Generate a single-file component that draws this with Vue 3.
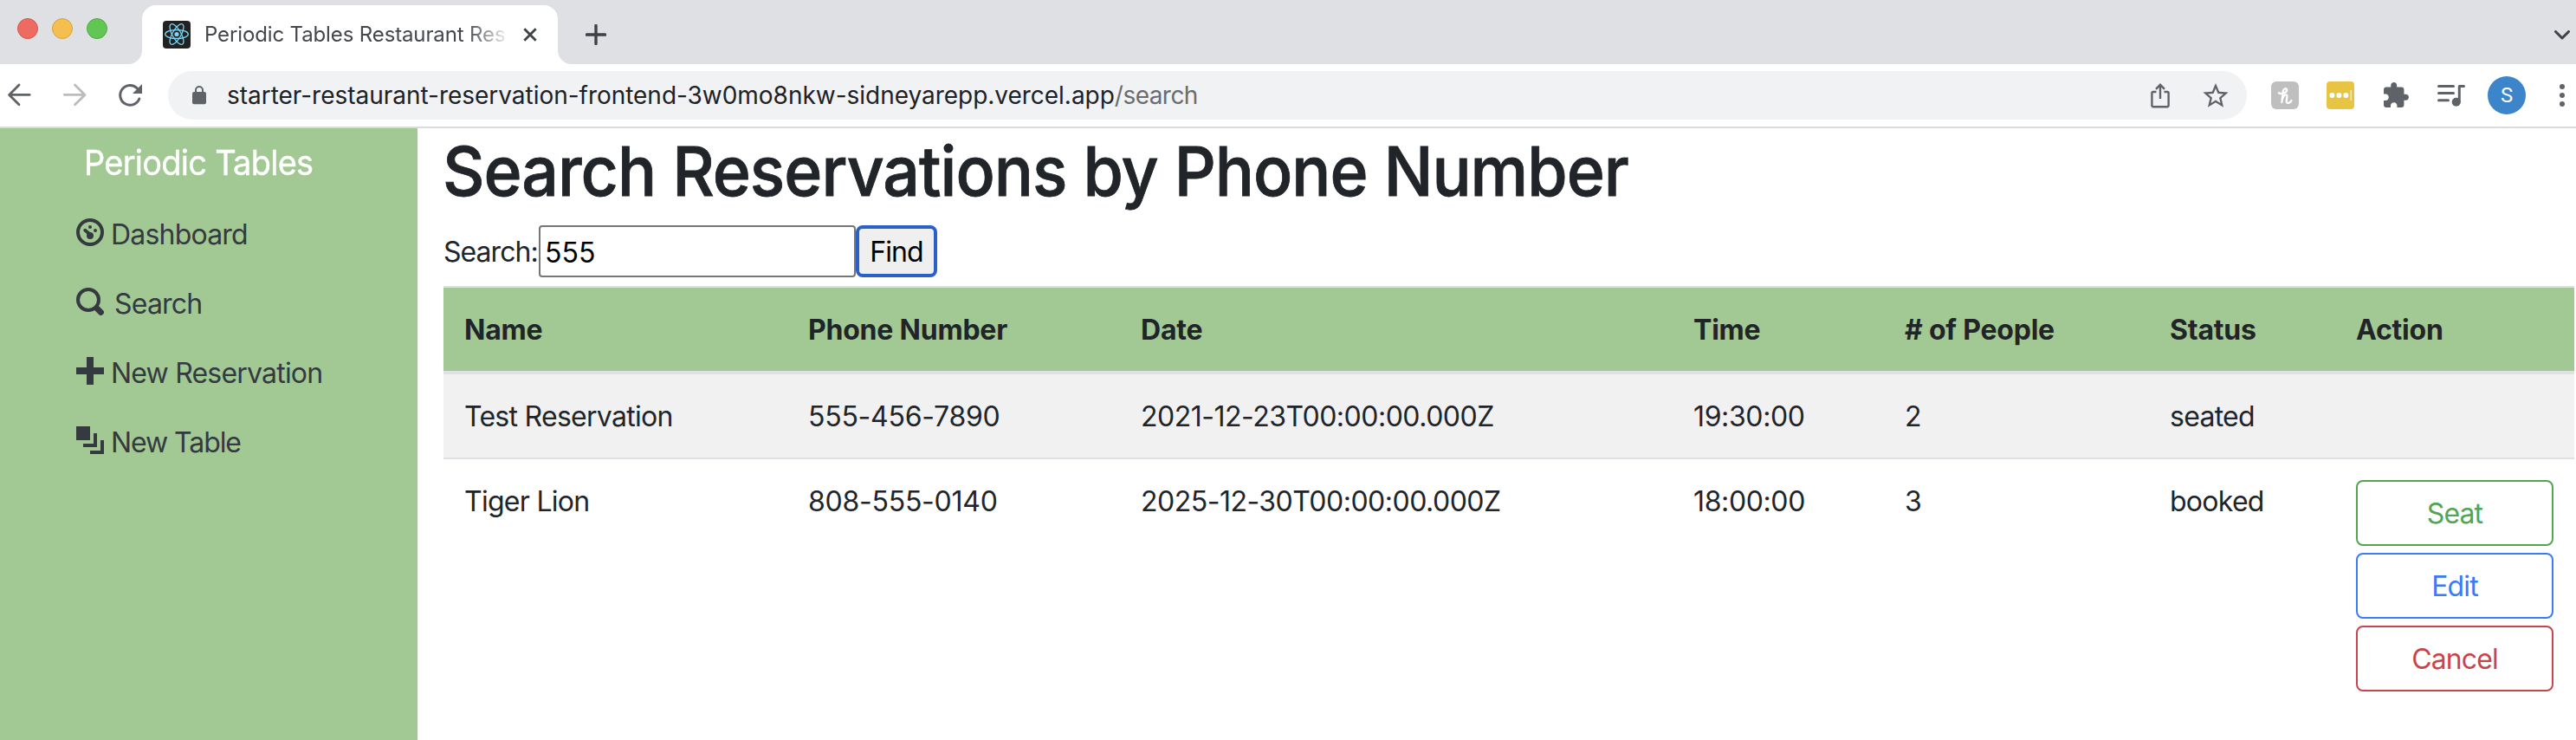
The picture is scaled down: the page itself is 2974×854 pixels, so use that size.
<script setup>
import { ref } from 'vue'

const query = ref('555')

const columns = [
  { key: 'name', label: 'Name' },
  { key: 'phone', label: 'Phone Number' },
  { key: 'date', label: 'Date' },
  { key: 'time', label: 'Time' },
  { key: 'people', label: '# of People' },
  { key: 'status', label: 'Status' }
]

const reservations = [
  { id: 1, name: 'Test Reservation', phone: '555-456-7890', date: '2021-12-23T00:00:00.000Z', time: '19:30:00', people: 2, status: 'seated' },
  { id: 2, name: 'Tiger Lion', phone: '808-555-0140', date: '2025-12-30T00:00:00.000Z', time: '18:00:00', people: 3, status: 'booked' }
]
</script>

<template>
  <div class="window">
    <div class="tabstrip">
      <div class="lights">
        <span class="light red"></span>
        <span class="light yellow"></span>
        <span class="light green"></span>
      </div>
      <div class="tab">
        <svg class="favicon" viewBox="0 0 32 32">
          <rect width="32" height="32" rx="4" fill="#222" />
          <g fill="none" stroke="#7ed3f3" stroke-width="1.3">
            <ellipse cx="16" cy="15.5" rx="13.3" ry="5" />
            <ellipse cx="16" cy="15.5" rx="13.3" ry="5" transform="rotate(60 16 15.5)" />
            <ellipse cx="16" cy="15.5" rx="13.3" ry="5" transform="rotate(120 16 15.5)" />
          </g>
          <circle cx="16" cy="15.5" r="2.6" fill="#7ed3f3" />
        </svg>
        <span class="tab-title">Periodic Tables Restaurant Res</span>
        <svg class="tab-close" viewBox="0 0 16 16"><path d="M1.3 1.3 14.7 14.7M14.7 1.3 1.3 14.7" fill="none" stroke="#3e4246" stroke-width="2.8" /></svg>
      </div>
      <svg class="new-tab" viewBox="0 0 24 24"><path d="M12 1.4v21.2M1.4 12h21.2" fill="none" stroke="#3e4246" stroke-width="3.4" stroke-linecap="round" /></svg>
      <svg class="tab-menu" viewBox="0 0 18 12"><path d="M1.5 1.5 9 9l7.5-7.5" fill="none" stroke="#3e4246" stroke-width="3" stroke-linecap="round" stroke-linejoin="round" /></svg>
    </div>

    <div class="toolbar">
      <svg class="icon" viewBox="0 0 32 32"><path d="M16 4 4.6 15.4 16 26.8M5 15.4h23.2" fill="none" stroke="#5f6368" stroke-width="2.8" stroke-linecap="round" stroke-linejoin="round" /></svg>
      <svg class="icon" viewBox="0 0 32 32"><path d="M16.5 4 28 15.4 16.5 26.8M27.5 15.4H4.3" fill="none" stroke="#bbbcbe" stroke-width="2.8" stroke-linecap="round" stroke-linejoin="round" /></svg>
      <svg class="icon" viewBox="0 0 32 32">
        <path d="M24.4 8A11.4 11.4 0 1 0 26.8 20" fill="none" stroke="#5f6368" stroke-width="3" stroke-linecap="round" />
        <path d="M30 3v11H19z" fill="#5f6368" />
      </svg>
      <div class="omnibox">
        <svg class="lock" viewBox="0 0 16 22">
          <rect x="0" y="7" width="16" height="14.2" rx="2" fill="#5f6368" />
          <path d="M4 8V5a4 4 0 0 1 8 0v3" fill="none" stroke="#5f6368" stroke-width="2" />
        </svg>
        <span class="url"><span class="host">starter-restaurant-reservation-frontend-3w0mo8nkw-sidneyarepp.vercel.app</span><span class="path">/search</span></span>
        <svg class="icon share" viewBox="0 0 32 32">
          <path d="M11.5 12H8a1.6 1.6 0 0 0-1.6 1.6v14A1.6 1.6 0 0 0 8 29.2h16a1.6 1.6 0 0 0 1.6-1.6v-14A1.6 1.6 0 0 0 24 12h-3.5M16 20V4M11 8.8l5-5 5 5" fill="none" stroke="#5f6368" stroke-width="2.4" />
        </svg>
        <svg class="icon star" viewBox="1.05 .63 21.9 21.9">
          <path d="M22 9.24l-7.19-.62L12 2 9.19 8.63 2 9.24l5.46 4.73L5.82 21 12 17.27 18.18 21l-1.63-7.03L22 9.24zM12 15.4l-3.76 2.27 1-4.28-3.32-2.88 4.38-.38L12 6.1l1.71 4.04 4.38.38-3.32 2.88 1 4.28L12 15.4z" fill="#5f6368" />
        </svg>
      </div>
      <svg class="icon honey" viewBox="0 0 32 32">
        <rect width="32" height="32" rx="6" fill="#bfbfbf" />
        <path d="M8.8 13.2C12 15.5 18.6 12.8 18.2 9.6 17.9 7.4 14.6 7.8 13.8 11L12.4 24M12.6 21C14 17 16 14.8 17.9 15.6c2.2 1-2.2 8.6 1 9.2 2 .3 3.8-1.2 4.6-2.8" fill="none" stroke="#fff" stroke-width="2.3" stroke-linecap="round" stroke-linejoin="round" />
      </svg>
      <svg class="icon" viewBox="0 0 32 32">
        <rect width="32" height="32" rx="4" fill="#e7c443" />
        <circle cx="6.4" cy="16" r="3" fill="#fff" /><circle cx="14.4" cy="16" r="3" fill="#fff" /><circle cx="22.4" cy="16" r="3" fill="#fff" />
        <path d="M28.2 10v12" stroke="#f8edc4" stroke-width="1.3" />
      </svg>
      <svg class="icon" viewBox=".55 .27 23.2 23.2">
        <path d="M20.5 11H19V7c0-1.1-.9-2-2-2h-4V3.5C13 2.12 11.88 1 10.5 1S8 2.12 8 3.5V5H4c-1.1 0-1.99.9-1.99 2v3.8H3.5c1.49 0 2.7 1.21 2.7 2.7s-1.21 2.7-2.7 2.7H2V20c0 1.1.9 2 2 2h3.8v-1.5c0-1.49 1.21-2.7 2.7-2.7 1.49 0 2.7 1.21 2.7 2.7V22H17c1.1 0 2-.9 2-2v-4h1.5c1.38 0 2.5-1.12 2.5-2.5S21.88 11 20.5 11z" fill="#5f6368" />
      </svg>
      <svg class="icon" viewBox="0 0 32 32">
        <path d="M1.5 5.5h17M1.5 13.6h17M1.5 21.7h11" stroke="#5f6368" stroke-width="3" stroke-linecap="round" />
        <circle cx="21.7" cy="23.8" r="5" fill="#5f6368" />
        <path d="M25.3 24V5.5h5.2" fill="none" stroke="#5f6368" stroke-width="3" stroke-linecap="round" stroke-linejoin="round" />
      </svg>
      <span class="avatar">S</span>
      <svg class="icon menu" viewBox="0 0 32 32"><circle cx="16" cy="6" r="3" fill="#5f6368" /><circle cx="16" cy="16" r="3" fill="#5f6368" /><circle cx="16" cy="26" r="3" fill="#5f6368" /></svg>
    </div>

    <div class="page">
      <nav class="sidebar">
        <a class="brand">Periodic Tables</a>
        <a class="nav-link">
          <svg class="oi" viewBox="0 0 8 8" fill="#343a40">
            <circle cx="4" cy="4" r="3.5" fill="none" stroke="#343a40" />
            <circle cx="4" cy="2.5" r=".5" /><circle cx="5.5" cy="3.5" r=".5" /><circle cx="4" cy="5" r="1" />
            <path d="M2.55 3.45 4 4.6" stroke="#343a40" stroke-width=".95" stroke-linecap="round" />
          </svg>
          <span>Dashboard</span>
        </a>
        <a class="nav-link wide-gap">
          <svg class="oi" viewBox="0 0 8 8">
            <circle cx="3.5" cy="3.5" r="3" fill="none" stroke="#343a40" />
            <path d="M6.1 6.1 7.1 7.1" stroke="#343a40" stroke-width="1.75" stroke-linecap="round" />
          </svg>
          <span>Search</span>
        </a>
        <a class="nav-link">
          <svg class="oi" viewBox="0 0 8 8"><path d="M3 0v3H0v2h3v3h2V5h3V3H5V0z" fill="#343a40" /></svg>
          <span>New Reservation</span>
        </a>
        <a class="nav-link tight">
          <svg class="oi" viewBox="0 0 8 8"><path d="M0 0v4h4V0zM5 2v3H2v1h4V2zM7 4v3H4v1h4V4z" fill="#343a40" /></svg>
          <span>New Table</span>
        </a>
      </nav>

      <main class="content">
        <h1>Search Reservations by Phone Number</h1>
        <form class="search" @submit.prevent>
          <label for="phone">Search:</label>
          <input id="phone" v-model="query" type="text" />
          <button class="find" type="submit">Find</button>
        </form>
        <table>
          <colgroup>
            <col class="c-name" /><col class="c-phone" /><col class="c-date" /><col class="c-time" /><col class="c-people" /><col class="c-status" /><col class="c-action" />
          </colgroup>
          <thead>
            <tr>
              <th v-for="c in columns" :key="c.key">{{ c.label }}</th>
              <th>Action</th>
            </tr>
          </thead>
          <tbody>
            <tr v-for="r in reservations" :key="r.id">
              <td v-for="c in columns" :key="c.key" :class="c.key">{{ r[c.key] }}</td>
              <td>
                <div v-if="r.status === 'booked'" class="actions">
                  <button class="btn seat">Seat</button>
                  <button class="btn edit">Edit</button>
                  <button class="btn cancel">Cancel</button>
                </div>
              </td>
            </tr>
          </tbody>
        </table>
      </main>
    </div>
  </div>
</template>

<style>
body { background: #fff; }
</style>

<style scoped>
* { box-sizing: border-box; }
svg { display: block; flex: none; }
.window { width: 2974px; height: 854px; overflow: hidden; display: flex; flex-direction: column; background: #fff; color: #212529; font-family: Inter, "Liberation Sans", sans-serif; font-size: 32px; line-height: 48px; }

.tabstrip { height: 74px; flex: none; display: flex; background: #dfe0e4; padding-left: 20px; }
.lights { display: flex; gap: 16px; padding-top: 21px; width: 144px; }
.light { width: 24px; height: 24px; border-radius: 50%; border: 1px solid; }
.red { background: #ed6b60; border-color: #d6554a; }
.yellow { background: #f5bf4f; border-color: #d9a13f; }
.green { background: #62c655; border-color: #4fa93d; }
.tab { position: relative; width: 480px; height: 68px; margin-top: 6px; padding: 0 24px; display: flex; align-items: center; background: #fff; border-radius: 16px 16px 0 0; }
.tab::before, .tab::after { content: ""; position: absolute; bottom: 0; width: 16px; height: 16px; }
.tab::before { left: -16px; background: radial-gradient(circle at 0 0, transparent 15.5px, #fff 16.5px); }
.tab::after { right: -16px; background: radial-gradient(circle at 100% 0, transparent 15.5px, #fff 16.5px); }
.favicon { width: 32px; height: 32px; }
.tab-title { width: 348px; margin-left: 16px; white-space: nowrap; font-size: 24px; line-height: 32px; letter-spacing: -0.13px; color: #44474b; mask-image: linear-gradient(to right, #000 302px, transparent 354px); }
.tab-close { width: 16px; height: 16px; margin-left: 20px; }
.new-tab { width: 24px; height: 24px; margin: 28px 0 0 32px; }
.tab-menu { width: 18px; height: 12px; margin: 35px 7px 0 auto; }

.toolbar { height: 74px; flex: none; display: flex; align-items: center; padding-left: 6px; border-bottom: 2px solid #dadbdc; background: #fff; }
.icon { width: 32px; height: 32px; }
.icon + .icon { margin-left: 32px; }
.omnibox { width: 2400px; height: 56px; margin-left: 28px; padding: 0 20px 0 28px; border-radius: 28px; background: #f1f2f4; display: flex; align-items: center; }
.lock { width: 16px; height: 22px; }
.url { margin-left: 24px; font-size: 28px; line-height: 40px; white-space: nowrap; }
.host { color: #202124; letter-spacing: -0.025px; }
.path { color: #6a6d70; letter-spacing: -0.54px; }
.share { margin-left: auto; }
.honey { margin-left: 28px; }
.avatar { width: 44px; height: 44px; margin-left: 26px; border-radius: 50%; background: #3c85cb; color: #fff; font: 24px/44px Roboto, sans-serif; text-align: center; }
.menu { margin-left: 26px; }

.page { flex: 1; display: flex; }
.sidebar { width: 482px; background: #a2c994; padding-top: 10px; display: flex; flex-direction: column; }
.brand { margin: 0 0 12px 97px; font-size: 40px; line-height: 60px; letter-spacing: -0.8px; color: #fff; white-space: nowrap; transform: scaleX(0.95); transform-origin: left; -webkit-text-stroke: 0.4px #fff; }
.nav-link { display: flex; gap: 8px; padding: 17px 0 15px 88px; color: #343a40; letter-spacing: -0.8px; white-space: nowrap; }
.wide-gap { gap: 12px; }
.tight { letter-spacing: -1.08px; }
.oi { width: 32px; height: 32px; margin-top: 5px; }

.content { flex: 1; padding: 1px 0 0 30px; }
h1 { margin: 0 0 15px -1px; font-size: 79px; line-height: 96px; font-weight: 500; letter-spacing: -1.03px; white-space: nowrap; transform: scaleX(0.95); transform-origin: left; -webkit-text-stroke: 0.8px #212529; }
.search { display: flex; height: 60px; margin-bottom: 10px; }
label { width: 110px; line-height: 62px; letter-spacing: -0.95px; }
input { width: 366px; height: 60px; padding: 2px 5px 0; border: 2px solid #767676; border-radius: 4px; background: #fff; color: #000; font: inherit; outline: none; }
.find { width: 94px; height: 60px; padding: 2px 0 0; border: 4px solid #2a61c9; border-radius: 8px; background: #efefef; color: #000; font: inherit; letter-spacing: -0.9px; }

table { width: 2460px; table-layout: fixed; border-collapse: separate; border-spacing: 0; }
.c-name { width: 397px; }
.c-phone { width: 384px; }
.c-date { width: 638px; }
.c-time { width: 244px; }
.c-people { width: 306px; }
.c-status { width: 215px; }
.c-action { width: 276px; }
th, td { padding: 25px 24px 23px; border-top: 2px solid #dee2e6; text-align: left; vertical-align: top; white-space: nowrap; }
th { background: #a2c994; border-bottom: 2px solid #dee2e6; font-weight: 700; letter-spacing: -0.22px; }
tbody tr:nth-child(odd) td { background: #f1f1f1; }
.name, .status { letter-spacing: -0.72px; }
.phone { letter-spacing: -0.25px; }
.date { letter-spacing: -0.5px; }
.time { letter-spacing: -0.38px; }
.actions { display: flex; flex-direction: column; gap: 8px; margin-top: -1px; }
.btn { width: 228px; height: 76px; padding: 2px 0 0; border: 2px solid currentColor; border-radius: 8px; background: #fff; font: inherit; letter-spacing: -0.9px; }
.seat { color: #53a551; }
.edit { color: #3a7bf7; }
.cancel { color: #ca444b; }
</style>
